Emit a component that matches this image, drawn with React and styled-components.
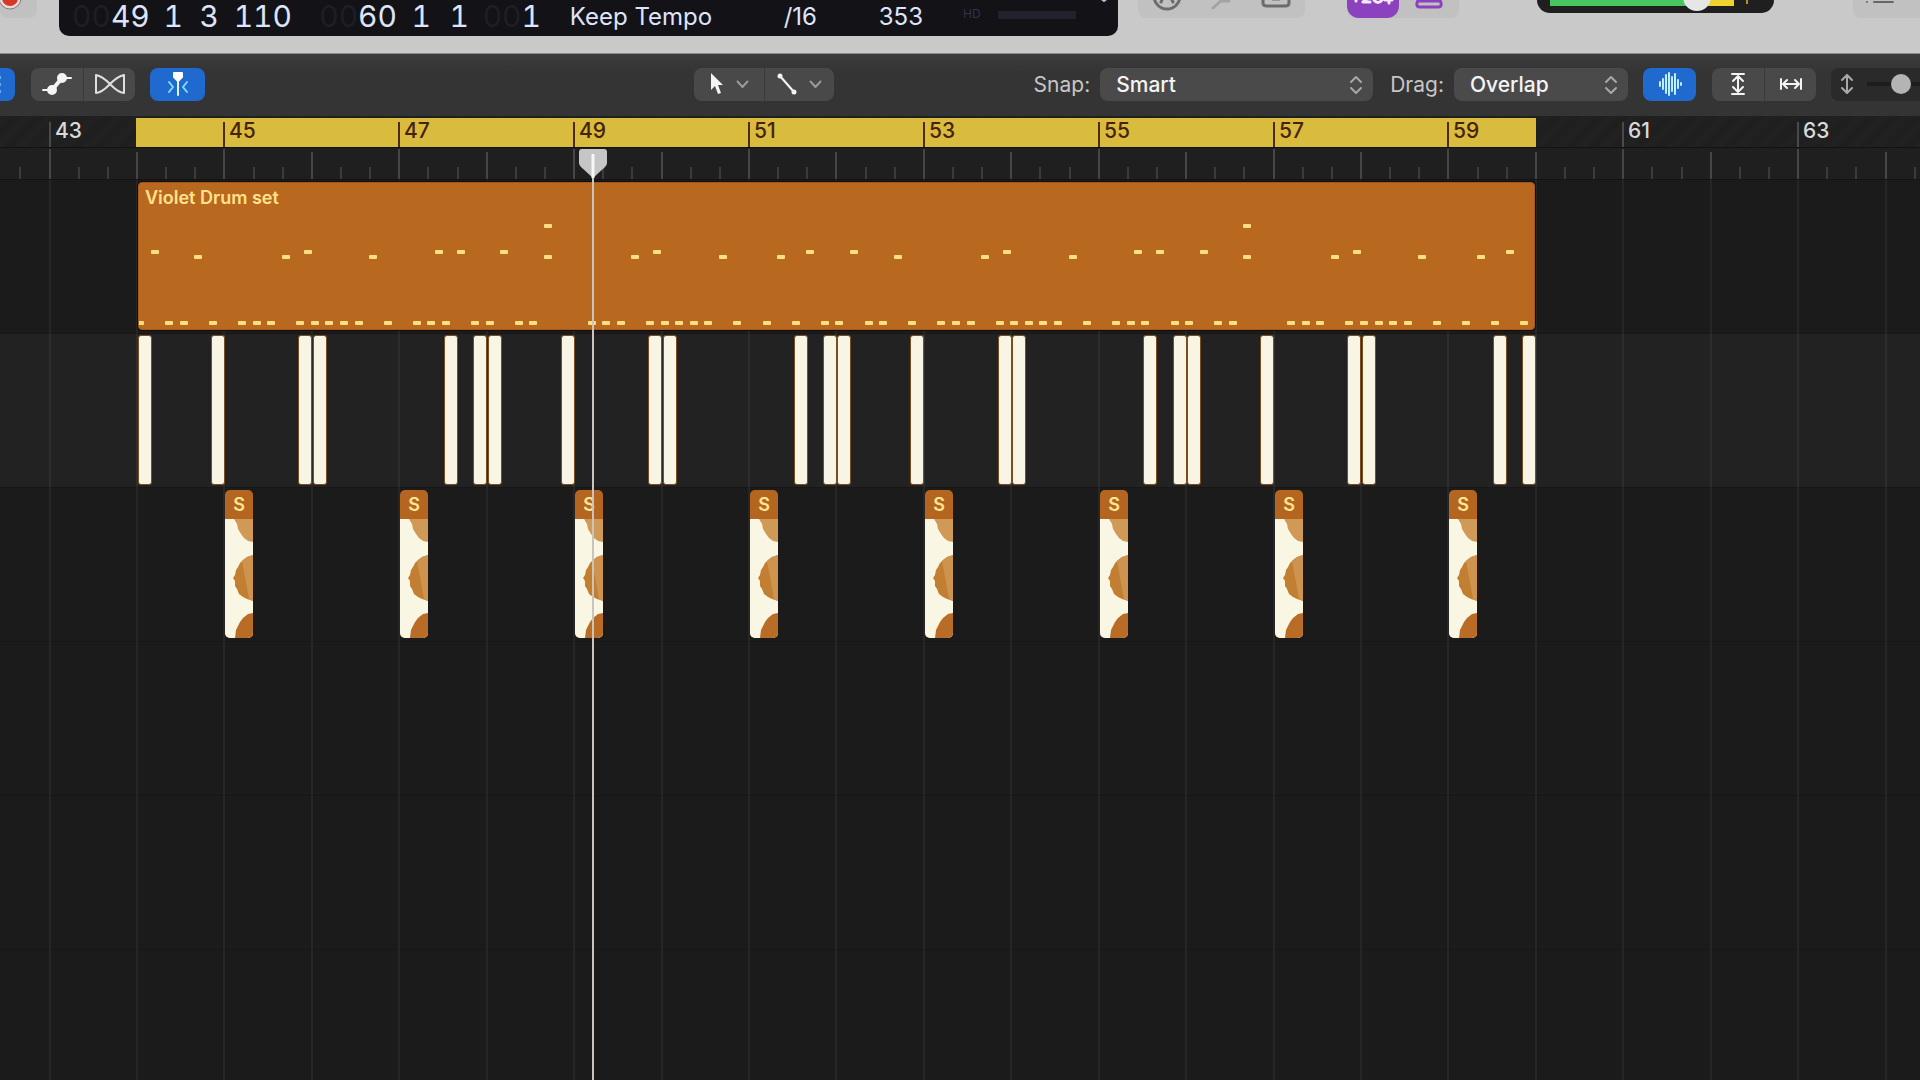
import React, { useState } from 'react';
import styled, { createGlobalStyle } from 'styled-components';

const BAR_WIDTH = 87.43;
const FIRST_BAR_X = 49.5;
const FIRST_BAR = 43;
const LAST_BAR = FIRST_BAR + Math.floor((window.innerWidth - FIRST_BAR_X) / BAR_WIDTH);
const CYCLE = { start: 44, end: 60 };
const PLAYHEAD = 49.215;

const barX = (bar) => Math.round(FIRST_BAR_X + (bar - FIRST_BAR) * BAR_WIDTH);

// kick clips, in sixths of a bar from the cycle start
const KICKS = [0, 5, 11, 12, 21, 23, 24, 29, 35, 36, 45, 47, 48, 53, 59, 60, 69, 71, 72, 77, 83, 84, 93, 95];
const SNARES = [45, 47, 49, 51, 53, 55, 57, 59];

// midi notes, in twelfths of a bar from the region start
const NOTES = [
  { top: 42, at: [56, 152] },
  { top: 68, at: [2, 23, 41, 44, 50, 71, 92, 98, 119, 137, 140, 146, 167, 188] },
  { top: 73, at: [8, 20, 32, 56, 68, 80, 88, 104, 116, 128, 152, 164, 176, 184] },
  {
    top: 139,
    at: [
      0, 4, 6, 10, 14, 16, 18, 22, 24, 26, 28, 30, 34, 38, 40, 42, 46, 48, 52, 54, 62, 64, 66, 70, 72, 74, 76, 78,
      82, 86, 90, 94, 96, 100, 102, 106, 110, 112, 114, 118, 120, 122, 124, 126, 130, 134, 136, 138, 142, 144, 148,
      150, 158, 160, 162, 166, 168, 170, 172, 174, 178, 182, 186, 190,
    ],
  },
];

const GlobalStyle = createGlobalStyle`
  * {
    box-sizing: border-box;
  }
  body {
    margin: 0;
    background: #1b1b1b;
    font-family: Inter, "Liberation Sans", sans-serif;
  }
  button, select, input {
    font-family: inherit;
    margin: 0;
  }
`;

const Page = styled.div`
  min-height: 100vh;
  display: flex;
  flex-direction: column;
`;

/* control bar */

const ControlBar = styled.header`
  display: flex;
  align-items: flex-start;
  height: 54px;
  flex-shrink: 0;
  background: #c9c9c9;
  border-bottom: 1px solid #8b8b8b;
`;

const ControlGroup = styled.div`
  display: flex;
  justify-content: ${(p) => p.$justify || 'space-between'};
  width: ${(p) => p.$width}px;
  height: 18px;
  margin-left: ${(p) => p.$gap || 0}px;
  padding: 0 ${(p) => p.$pad || 0}px;
  flex-shrink: 0;
  background: #c1c1c1;
  border-radius: 0 0 ${(p) => (p.$open ? 0 : 8)}px 8px;
`;

const ControlButton = styled.button`
  display: flex;
  align-items: flex-start;
  justify-content: center;
  height: 18px;
  padding: 0;
  border: none;
  background: transparent;
  color: #6c6c6c;
`;

const CountInButton = styled(ControlButton)`
  width: 54px;
  background: #8c42bf;
  border-radius: 0 0 12px 12px;
`;

const Lcd = styled.div`
  display: flex;
  flex: 1;
  height: 36px;
  margin-left: 22px;
  padding-left: 13px;
  background: #121217;
  border-radius: 0 0 10px 10px;
  color: #dfe4fb;
  white-space: nowrap;
`;

const Digits = styled.span`
  width: ${(p) => p.$width}px;
  flex-shrink: 0;
  text-align: right;
  font-size: 30px;
  line-height: 32px;
  font-variant-numeric: tabular-nums;
`;

const Dim = styled.span`
  color: #1e1e26;
`;

const LcdText = styled.span`
  width: ${(p) => p.$width}px;
  flex-shrink: 0;
  text-align: ${(p) => p.$align || 'right'};
  font-size: 24px;
  line-height: 34px;
`;

const HdLabel = styled.span`
  margin-left: 40px;
  font-size: 12px;
  line-height: 28px;
  color: #33334a;
`;

const CpuMeter = styled.div`
  flex: 1;
  max-width: 78px;
  height: 8px;
  margin: 11px 0 0 17px;
  background: #22222f;
`;

const LcdMenu = styled.button`
  margin-left: auto;
  width: 26px;
  height: 6px;
  padding: 0;
  border: none;
  background: transparent;
  display: flex;
`;

const Volume = styled.div`
  position: relative;
  width: 237px;
  height: 13px;
  margin-left: 78px;
  padding: 0 40px 0 13px;
  flex-shrink: 0;
  background: #1f1f1f;
  border-radius: 0 0 14px 14px;
`;

const VolumeLevel = styled.div`
  height: 6px;
  background: linear-gradient(90deg, #49c45f 0 82%, #ecd332 82% 100%);
`;

const VolumeInput = styled.input`
  position: absolute;
  left: 0;
  top: -17px;
  width: 100%;
  height: 28px;
  appearance: none;
  background: transparent;
  &::-webkit-slider-thumb {
    appearance: none;
    width: 28px;
    height: 28px;
    border-radius: 50%;
    background: #e6e6e6;
  }
`;

const PeakMark = styled.span`
  position: absolute;
  right: 26px;
  top: 0;
  width: 2px;
  height: 4px;
  background: #a8932c;
`;

/* toolbar */

const Toolbar = styled.div`
  display: flex;
  align-items: center;
  height: 62px;
  padding-bottom: 2px;
  flex-shrink: 0;
  background: linear-gradient(#3c3c3c, #343434 30%, #343434);
  overflow: hidden;
`;

const ButtonGroup = styled.div`
  display: flex;
  margin-left: ${(p) => p.$gap || 0}px;
  border-radius: ${(p) => (p.$cut ? '0 8px 8px 0' : '8px')};
  background: #494949;
  overflow: hidden;
  flex-shrink: 0;
`;

const ToolButton = styled.button`
  display: flex;
  align-items: center;
  justify-content: center;
  gap: 12px;
  width: ${(p) => p.$width || 52}px;
  height: 33px;
  padding: 0;
  border: none;
  background: ${(p) => (p.$active ? '#2069cf' : 'transparent')};
  color: #f4f4f4;
  & + & {
    border-left: 1px solid #3a3a3a;
  }
`;

const Spacer = styled.div`
  flex: ${(p) => p.$grow};
`;

const FieldLabel = styled.label`
  margin-left: ${(p) => p.$gap || 0}px;
  margin-right: 10px;
  font-size: 21px;
  line-height: 33px;
  color: #c6c6c6;
`;

const SelectBox = styled.div`
  position: relative;
  width: ${(p) => p.$width}px;
  flex-shrink: 0;
  svg {
    position: absolute;
    right: 10px;
    top: 7px;
    pointer-events: none;
  }
`;

const Select = styled.select`
  appearance: none;
  width: 100%;
  height: 33px;
  padding: 0 16px;
  border: none;
  border-radius: 8px;
  background: #4a4a4a;
  color: #f4f4f4;
  font-size: 21px;
  font-weight: 500;
`;

const ZoomBox = styled.label`
  display: flex;
  align-items: center;
  gap: 13px;
  width: 89px;
  height: 33px;
  margin-left: 15px;
  padding-left: 9px;
  flex-shrink: 0;
  background: #2a2a2a;
  border-radius: 8px 0 0 8px;
  overflow: hidden;
  svg {
    flex-shrink: 0;
  }
`;

const ZoomInput = styled.input`
  appearance: none;
  flex-shrink: 0;
  width: 130px;
  height: 20px;
  background: linear-gradient(#1d1d1d, #1d1d1d) center / 100% 4px no-repeat;
  &::-webkit-slider-thumb {
    appearance: none;
    width: 20px;
    height: 20px;
    border-radius: 50%;
    background: #b4b4b4;
  }
`;

/* timeline */

const Timeline = styled.main`
  position: relative;
  flex: 1;
  display: flex;
  flex-direction: column;
  overflow: hidden;
`;

const CycleStrip = styled.div`
  position: relative;
  height: 32px;
  border-bottom: 1px solid #121212;
  background: repeating-linear-gradient(135deg, #212121 0 8px, #1f1f1f 8px 16px);
`;

const CycleRange = styled.div`
  position: absolute;
  top: 2px;
  height: 29px;
  background: #d9bb3d;
`;

const BarLabel = styled.span`
  position: absolute;
  top: 6px;
  height: 25px;
  padding-left: 4px;
  border-left: 2px solid ${(p) => (p.$inCycle ? '#4d2a08' : '#4a4a4a')};
  color: ${(p) => (p.$inCycle ? '#47220a' : '#dadada')};
  font-size: 21px;
  font-weight: 500;
  line-height: 18px;
`;

const TickStrip = styled.div`
  position: relative;
  height: 31px;
  background: #1f1f1f;
`;

const Tick = styled.span`
  position: absolute;
  bottom: 0;
  width: 2px;
  height: ${(p) => p.$height}px;
  background: ${(p) => (p.$height > 12 ? '#464646' : '#3b3b3a')};
`;

const Tracks = styled.div`
  position: relative;
  flex: 1;
  border-top: 1px solid #131313;
`;

const GridLine = styled.span`
  position: absolute;
  top: 0;
  bottom: 0;
  width: 2px;
  background: rgba(255, 255, 255, 0.05);
  pointer-events: none;
`;

const Track = styled.div`
  position: relative;
  height: 154px;
  border-bottom: 1px solid #171717;
  background: ${(p) => (p.$selected ? '#222222' : '#1b1b1b')};
`;

const LaneContent = styled.div`
  position: absolute;
  left: 0;
  right: 0;
  top: ${(p) => p.$lane * 154}px;
  height: 154px;
`;

const MidiRegion = styled.div`
  position: absolute;
  top: 2px;
  height: 148px;
  padding: 4px 6px;
  border: 1px solid #a55a1a;
  border-radius: 4px;
  background: #b96820;
  box-shadow: 0 0 0 1px #120d08;
  color: #ffe38c;
  font-size: 18px;
  font-weight: 600;
  line-height: 22px;
  overflow: hidden;
`;

const Note = styled.span`
  position: absolute;
  width: 8px;
  height: 4px;
  border-radius: 1px;
  background: #ffdf80;
`;

const KickClip = styled.div`
  position: absolute;
  top: 1px;
  width: 14px;
  height: 150px;
  border: 1px solid #7c4d20;
  border-radius: 3px;
  background: #f8f5e4;
`;

const SnareClip = styled.div`
  position: absolute;
  top: 2px;
  width: 28px;
  height: 148px;
  border-radius: 5px;
  background: #b4651f;
  overflow: hidden;
  svg {
    display: block;
  }
`;

const ClipTitle = styled.div`
  height: 29px;
  color: #ffe594;
  font-size: 18px;
  font-weight: 600;
  line-height: 29px;
  text-align: center;
`;

const Playhead = styled.div`
  position: absolute;
  top: 32px;
  bottom: 0;
  width: 28px;
  pointer-events: none;
  &::before {
    content: '';
    position: absolute;
    left: 13px;
    top: 4px;
    bottom: 0;
    width: 2px;
    background: #c9c4bc;
  }
  svg {
    display: block;
    position: relative;
  }
`;

const Stroke = ({ width, height, children, color = 'currentColor', weight = 2 }) => (
  <svg width={width} height={height} viewBox={`0 0 ${width} ${height}`} fill="none" stroke={color} strokeWidth={weight} strokeLinecap="round" strokeLinejoin="round">
    {children}
  </svg>
);

const ChevronDown = () => (
  <Stroke width={13} height={9} color="#9a9a9a">
    <path d="M1.5 1.5 L6.5 7 L11.5 1.5" />
  </Stroke>
);

const UpDown = () => (
  <Stroke width={14} height={20} color="#a8a8a8">
    <path d="M2 7 L7 2 L12 7 M2 13 L7 18 L12 13" />
  </Stroke>
);

const Waveform = () => (
  <svg width="28" height="119" viewBox="0 0 28 119">
    <rect width="28" height="119" fill="#f9f6e3" />
    <path d="M9 0 L12 5 L13 10 L16 15 L19 19 L23 22 L28 23 V0 Z" fill="#d09a56" />
    <path d="M28 36 L22 38 L18 41 L15 44 L13 48 L11 51 L10 56 L8 59 L10 62 L10 67 L12 70 L14 75 L18 78 L22 80 L28 82 Z" fill="#c27f32" />
    <path d="M28 36 L22 38 L17 42 L20 58 L24 80 L28 82 Z" fill="#cf9350" />
    <path d="M28 94 L23 95 L18 99 L15 103 L13 107 L11 111 L10 119 H28 Z" fill="#b96c26" />
  </svg>
);

const ticks = [];
const bars = [];
for (let bar = FIRST_BAR - 1; bar <= LAST_BAR; bar++) {
  bars.push(bar);
  ticks.push({ at: bar, height: bar % 2 ? 30 : 27 });
  ticks.push({ at: bar + 1 / 3, height: 12 });
  ticks.push({ at: bar + 2 / 3, height: 12 });
}

const ControlHeader = () => {
  const [volume, setVolume] = useState(70);

  return (
    <ControlBar>
      <ControlGroup $width={37} $justify="flex-start">
        <ControlButton aria-label="Record">
          <svg width="22" height="11" viewBox="0 0 22 11">
            <circle cx="10" cy="-2" r="11" fill="#e3dcda" stroke="#8e7672" />
            <circle cx="10" cy="-2" r="8" fill="#d8372c" />
          </svg>
        </ControlButton>
      </ControlGroup>
      <Lcd>
        <Digits $width={76}><Dim>00</Dim>49</Digits>
        <Digits $width={35}>1</Digits>
        <Digits $width={36}>3</Digits>
        <Digits $width={73}>110</Digits>
        <Digits $width={105}><Dim>00</Dim>60</Digits>
        <Digits $width={34}>1</Digits>
        <Digits $width={38}>1</Digits>
        <Digits $width={72}><Dim>00</Dim>1</Digits>
        <LcdText $width={200} $align="center">Keep Tempo</LcdText>
        <LcdText $width={76}>/16</LcdText>
        <LcdText $width={106}>353</LcdText>
        <HdLabel>HD</HdLabel>
        <CpuMeter />
        <LcdMenu aria-label="Display mode">
          <Stroke width={20} height={4} color="#b9bdd0">
            <path d="M8 -2 L12 1 L16 -2" />
          </Stroke>
        </LcdMenu>
      </Lcd>
      <ControlGroup $width={167} $gap={20} $pad={14}>
        <ControlButton aria-label="Tuner">
          <Stroke width={30} height={12} weight={3}>
            <circle cx="15" cy="-4" r="13" />
            <path d="M9 2 L10 0 M21 2 L20 0" />
          </Stroke>
        </ControlButton>
        <ControlButton aria-label="Solo">
          <Stroke width={24} height={12} color="#a3a3a3" weight={3}>
            <path d="M3 8 L13 -1 M11 1 H19" />
          </Stroke>
        </ControlButton>
        <ControlButton aria-label="Replace">
          <Stroke width={30} height={10} weight={3}>
            <path d="M2 -4 V3 Q2 6 6 6 H24 Q28 6 28 3 V-4" />
            <path d="M12 -1 H18" />
          </Stroke>
        </ControlButton>
      </ControlGroup>
      <ControlGroup $width={112} $gap={42} $justify="flex-start">
        <CountInButton aria-label="Count in">
          <Stroke width={42} height={6} color="#f5eafa" weight={3}>
            <path d="M4 -2 V1 M11 2 H18 M11 2 L16 -2 M22 0 Q26 5 30 0 M33 0 H40 M37 -2 V3" />
          </Stroke>
        </CountInButton>
        <ControlButton aria-label="Metronome">
          <Stroke width={60} height={10} color="#8c42bf" weight={3}>
            <path d="M20 -3 L18 3 Q17 7 21 7 H39 Q43 7 42 3 L40 -3 M19 1 H41" />
          </Stroke>
        </ControlButton>
      </ControlGroup>
      <Volume>
        <VolumeLevel />
        <PeakMark />
        <VolumeInput type="range" aria-label="Master volume" value={volume} onChange={(e) => setVolume(e.target.value)} />
      </Volume>
      <ControlGroup $width={67} $gap={79} $pad={12} $justify="flex-start" $open>
        <ControlButton aria-label="List editors">
          <Stroke width={30} height={6} color="#666666">
            <path d="M2 2 H2 M9 2 H28" />
          </Stroke>
        </ControlButton>
      </ControlGroup>
    </ControlBar>
  );
};

const TracksToolbar = () => {
  const [snap, setSnap] = useState('Smart');
  const [drag, setDrag] = useState('Overlap');
  const [zoom, setZoom] = useState(22);

  return (
    <Toolbar>
      <ButtonGroup $cut>
        <ToolButton $active $width={15} aria-label="Grid view">
          <svg width="15" height="20" viewBox="0 0 15 20" fill="#5fb0ff">
            <rect width="1" height="3" y="2" />
            <rect width="1" height="3" y="9" />
            <rect width="1" height="3" y="16" />
          </svg>
        </ToolButton>
      </ButtonGroup>
      <ButtonGroup $gap={16}>
        <ToolButton aria-label="Show automation">
          <Stroke width={30} height={24}>
            <path d="M1 18 H10 M20 6 H29" />
            <path d="M10 18 L20 6" strokeWidth="4" />
            <circle cx="10" cy="18" r="4" fill="currentColor" />
            <circle cx="20" cy="6" r="4" fill="currentColor" />
          </Stroke>
        </ToolButton>
        <ToolButton aria-label="Flex">
          <Stroke width={32} height={22} color="#dedede">
            <path d="M2 2 V20 C9 19 12 15 16 11 S24 3 30 2 V20 C23 19 20 15 16 11 S8 3 2 2 Z" />
          </Stroke>
        </ToolButton>
      </ButtonGroup>
      <ButtonGroup $gap={15}>
        <ToolButton $active $width={55} aria-label="Catch playhead">
          <Stroke width={24} height={24} color="#7fdcff">
            <path d="M12 6 V23" stroke="#dff4ff" />
            <path d="M8 1 H16 V5 L12 9 L8 5 Z" fill="#ffffff" stroke="#ffffff" />
            <path d="M3 10 L7 15 L3 20 M21 10 L17 15 L21 20" />
          </Stroke>
        </ToolButton>
      </ButtonGroup>
      <Spacer $grow={49} />
      <ButtonGroup>
        <ToolButton $width={70} aria-label="Pointer tool">
          <svg width="14" height="24" viewBox="0 0 14 24" fill="currentColor">
            <path d="M1 1 V18 L5 14 L8 22 L11 21 L8 13 H13 Z" />
          </svg>
          <ChevronDown />
        </ToolButton>
        <ToolButton $width={70} aria-label="Line tool">
          <Stroke width={20} height={22}>
            <path d="M3 3 L17 19" />
            <circle cx="3" cy="3" r="1.5" fill="currentColor" />
            <circle cx="17" cy="19" r="1.5" fill="currentColor" />
          </Stroke>
          <ChevronDown />
        </ToolButton>
      </ButtonGroup>
      <Spacer $grow={20} />
      <FieldLabel htmlFor="snap">Snap:</FieldLabel>
      <SelectBox $width={273}>
        <Select id="snap" value={snap} onChange={(e) => setSnap(e.target.value)}>
          <option>Smart</option>
          <option>Bar</option>
          <option>Beat</option>
        </Select>
        <UpDown />
      </SelectBox>
      <FieldLabel htmlFor="drag" $gap={17}>Drag:</FieldLabel>
      <SelectBox $width={174}>
        <Select id="drag" value={drag} onChange={(e) => setDrag(e.target.value)}>
          <option>Overlap</option>
          <option>No Overlap</option>
          <option>X-Fade</option>
        </Select>
        <UpDown />
      </SelectBox>
      <ButtonGroup $gap={15}>
        <ToolButton $active $width={53} aria-label="Waveform zoom">
          <Stroke width={24} height={26} color="#bdf0ff">
            <path d="M2 11 V15 M5 8 V18 M8 4 V22 M11 2 V24 M14 6 V20 M17 3 V23 M20 9 V17 M23 12 V14" />
          </Stroke>
        </ToolButton>
      </ButtonGroup>
      <ButtonGroup $gap={16}>
        <ToolButton aria-label="Fit vertically">
          <Stroke width={14} height={24}>
            <path d="M1 2 H13 M1 22 H13 M7 4 V20 M2 9 L7 4 L12 9 M2 15 L7 20 L12 15" />
          </Stroke>
        </ToolButton>
        <ToolButton aria-label="Fit horizontally">
          <Stroke width={24} height={14}>
            <path d="M2 2 V12 M22 2 V12 M4 7 H20 M8 3 L4 7 L8 11 M16 3 L20 7 L16 11" />
          </Stroke>
        </ToolButton>
      </ButtonGroup>
      <ZoomBox>
        <Stroke width={14} height={20} color="#a9a9a9">
          <path d="M7 2 V18 M2 6 L7 1 L12 6 M2 14 L7 19 L12 14" />
        </Stroke>
        <ZoomInput type="range" aria-label="Vertical zoom" value={zoom} onChange={(e) => setZoom(e.target.value)} />
      </ZoomBox>
    </Toolbar>
  );
};

const Ruler = () => (
  <>
    <CycleStrip>
      <CycleRange style={{ left: barX(CYCLE.start) - 1, width: barX(CYCLE.end) - barX(CYCLE.start) + 1 }} />
      {bars.filter((bar) => bar % 2).map((bar) => (
        <BarLabel key={bar} $inCycle={bar >= CYCLE.start && bar < CYCLE.end} style={{ left: barX(bar) - 1 }}>
          {bar}
        </BarLabel>
      ))}
    </CycleStrip>
    <TickStrip>
      {ticks.map((tick) => (
        <Tick key={tick.at} $height={tick.height} style={{ left: barX(tick.at) - 1 }} />
      ))}
    </TickStrip>
  </>
);

const App = () => {
  const start = barX(CYCLE.start);

  return (
    <Page>
      <GlobalStyle />
      <ControlHeader />
      <TracksToolbar />
      <Timeline>
        <Ruler />
        <Tracks>
          <Track />
          <Track $selected />
          <Track />
          <Track />
          <Track />
          {bars.map((bar) => (
            <GridLine key={bar} style={{ left: barX(bar) - 1 }} />
          ))}
          <LaneContent $lane={0}>
            <MidiRegion style={{ left: start + 1, width: barX(CYCLE.end) - start - 2 }}>
              Violet Drum set
              {NOTES.map((row) =>
                row.at.map((n) => (
                  <Note key={`${row.top}-${n}`} style={{ left: Math.round((n * BAR_WIDTH) / 12) - 3, top: row.top - 1 }} />
                ))
              )}
            </MidiRegion>
          </LaneContent>
          <LaneContent $lane={1}>
            {KICKS.map((n) => (
              <KickClip key={n} style={{ left: barX(CYCLE.start + n / 6) + 1 }} />
            ))}
          </LaneContent>
          <LaneContent $lane={2}>
            {SNARES.map((bar) => (
              <SnareClip key={bar} style={{ left: barX(bar) + 1 }}>
                <ClipTitle>S</ClipTitle>
                <Waveform />
              </SnareClip>
            ))}
          </LaneContent>
        </Tracks>
        <Playhead style={{ left: barX(PLAYHEAD) - 14 }}>
          <svg width="28" height="30" viewBox="0 0 28 30">
            <path d="M3 1 H25 Q28 1 28 4 V15 Q28 17 26 19 L14 30 L2 19 Q0 17 0 15 V4 Q0 1 3 1 Z" fill="#c6c6c6" />
            <path d="M14 6 V30" stroke="#f7f7f7" strokeWidth="3" />
          </svg>
        </Playhead>
      </Timeline>
    </Page>
  );
};

export default App;
